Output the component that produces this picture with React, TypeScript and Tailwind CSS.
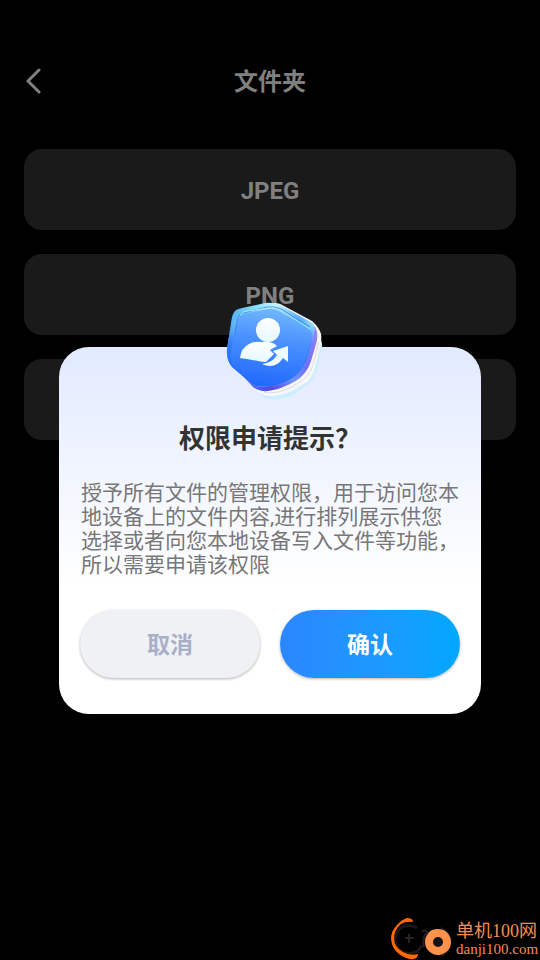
import React from "react";

const formats = ["JPEG", "PNG", ""];

function ShieldIcon() {
  return (
    <svg viewBox="0 0 104 108" className="h-[108px] w-[104px]" aria-hidden="true">
      <defs>
        <linearGradient id="face" x1="0.55" y1="0" x2="0.4" y2="1">
          <stop offset="0" stopColor="#72b8ff" />
          <stop offset="0.4" stopColor="#4a91ff" />
          <stop offset="1" stopColor="#2169fc" />
        </linearGradient>
        <linearGradient id="rim" x1="0" y1="0.2" x2="1" y2="0.4">
          <stop offset="0" stopColor="#4fa9f2" />
          <stop offset="0.25" stopColor="#7fd8f8" />
          <stop offset="0.5" stopColor="#c4f6ff" />
          <stop offset="0.8" stopColor="#55acfb" />
          <stop offset="1" stopColor="#a9ecff" />
        </linearGradient>
        <linearGradient id="rimFade" x1="0" y1="0" x2="0" y2="1">
          <stop offset="0.25" stopColor="#3b84fd" stopOpacity="0" />
          <stop offset="0.5" stopColor="#3078fc" />
          <stop offset="1" stopColor="#2469fa" />
        </linearGradient>
        <linearGradient id="side" x1="1" y1="0" x2="0.2" y2="1">
          <stop offset="0" stopColor="#9a8cf8" />
          <stop offset="0.45" stopColor="#6f6cf3" />
          <stop offset="0.65" stopColor="#6f95fb" />
          <stop offset="0.85" stopColor="#5247dd" />
          <stop offset="1" stopColor="#4f86ff" />
        </linearGradient>
        <linearGradient id="person" x1="0" y1="0" x2="0" y2="1">
          <stop offset="0" stopColor="#ffffff" />
          <stop offset="1" stopColor="#e4f8ff" />
        </linearGradient>
      </defs>
      <path d="M20 70L96 38Q101 42 100 51L96 69Q94 79 87 86L71 97Q58 103 47 101Q41 100 36 95Z" fill="#cdeefb" />
      <path d="M8 66L52 5Q58 5 62 8L90 23Q97 29 99 36Q100 42 98 50L93 69Q91 78 85 84L70 93Q58 98 48 98Q42 98 36 94Z" fill="#f8f6f8" />
      <path d="M42 94Q54 97 70 89L83 80Q89 74 91 67L97 44" fill="none" stroke="#dedce6" strokeWidth="1" />
      <path d="M6 62L88 25Q94 28 95 34Q96 40 94 46L89 63Q86 73 78 80Q70 86 56 91L46 93Q38 94 31 89Z" fill="url(#side)" />
      <path d="M14 12Q16 11 20 10L43 5Q53 4 60 8L90 25Q94 28 92 35L86 58Q82 71 73 78Q63 86 48 88Q38 90 31 87L10 69Q4 62 5 51L9 25Q10 15 14 12Z" fill="url(#rim)" />
      <path d="M14 12Q16 11 20 10L43 5Q53 4 60 8L90 25Q94 28 92 35L86 58Q82 71 73 78Q63 86 48 88Q38 90 31 87L10 69Q4 62 5 51L9 25Q10 15 14 12Z" fill="url(#rimFade)" />
      <path d="M20 17Q22 16 25 15L46 11Q53 10 59 14L87 31Q91 34 90 39L85 58Q81 71 72 78Q62 86 48 88Q38 89 32 86L12 69Q8 63 9 54L14 26Q16 18 20 17Z" fill="url(#face)" />
      <path d="M12 40L15 22Q16 16 21 15L45 9Q53 8 59 11L88 29" fill="none" stroke="#3f8cf5" strokeWidth="1" />
      <path d="M18 17Q21 13 26 13L46 10Q53 9 60 13L88 31" fill="none" stroke="#a5e6ff" strokeWidth="1" />
      <circle cx="46" cy="32" r="12" fill="url(#person)" />
      <path d="M18 60Q19 50 27 46Q32 43 40 44Q50 43 55 48L48 52L52 56L44 64Q40 64 36 63Q24 61 18 60Z" fill="url(#person)" />
      <path d="M40 66Q50 65 55 57L51 53L66 48V64L61 60Q53 72 40 66Z" fill="#effbff" />
    </svg>
  );
}

function Watermark() {
  return (
    <div className="absolute right-0 bottom-0 flex items-end">
      <svg viewBox="0 0 70 45" className="h-[45px] w-[70px]" fill="none" aria-hidden="true">
        <path d="M31 13A14 14 0 1 0 36 30" stroke="#1d1718" strokeWidth="3" />
        <path d="M19 23H28M23 19V28" stroke="#292122" strokeWidth="2" />
        <path d="M27 7Q27 3 21 3Q15 5 11 10Q5 16 5 24Q6 34 13 39Q21 45 28 44Q32 43 32 39Q24 41 17 37Q8 32 8 24Q8 15 15 9Q20 6 27 7Z" fill="#ff6900" />
        <path d="M36 17Q38 14 41 17Q36 23 38 32" stroke="#29201f" strokeWidth="2" />
        <path d="M55 13A15 15 0 0 1 55 41" stroke="#211a1a" strokeWidth="2" />
        <path d="M51 14A13 13 0 1 1 41 20Q44 14 51 14Z" fill="#ff914c" />
        <circle cx="52" cy="27" r="5" fill="#171213" />
      </svg>
      <div className="w-[84px] pb-0.5 font-['Liberation_Serif','Noto_Sans_CJK_SC',serif] whitespace-nowrap text-[#f88c50]">
        <div className="text-[18px] leading-[20px]">单机100网</div>
        <div className="text-[15px] leading-[17px]">danji100.com</div>
      </div>
    </div>
  );
}

export default function App() {
  return (
    <div className="relative min-h-screen overflow-hidden bg-black font-[Roboto,'Noto_Sans_CJK_SC',sans-serif]" lang="zh-CN">
      <header className="grid h-[101px] grid-cols-[48px_1fr_48px] items-center px-2 pt-[60px]">
        <button type="button" aria-label="返回" className="flex h-10 items-center justify-center pl-1">
          <svg viewBox="0 0 16 26" className="h-[26px] w-4" fill="none" stroke="#808080" strokeWidth="3" strokeLinecap="round" strokeLinejoin="round" aria-hidden="true">
            <path d="M13 2L2 13L13 24" />
          </svg>
        </button>
        <h1 className="pt-0.5 text-center text-2xl font-bold text-[#808080]">文件夹</h1>
      </header>

      <main className="flex flex-col gap-6 px-6 pt-12">
        {formats.map((name, i) => (
          <section key={i} className="flex h-[81px] items-center justify-center rounded-[18px] bg-[#1a1a1a] pt-0.5 text-2xl font-bold text-[#808080]">
            {name}
          </section>
        ))}
      </main>

      <div className="absolute inset-0 px-[59px] pt-[347px]">
        <div role="dialog" aria-modal="true" aria-labelledby="dialog-title" className="relative rounded-[30px] bg-linear-to-b from-[#e2eaff] to-white to-65% px-[21px] pt-[75px] pb-9">
          <div className="absolute inset-x-0 -top-[49px] flex justify-center pl-2">
            <ShieldIcon />
          </div>
          <h2 id="dialog-title" className="text-center text-[26px] leading-[34px] font-bold text-[#333333]">权限申请提示？</h2>
          <p className="mt-[25px] px-px text-[21px] leading-6 text-[#777777]">
            授予所有文件的管理权限，用于访问您本地设备上的文件内容,进行排列展示供您选择或者向您本地设备写入文件等功能，所以需要申请该权限
          </p>
          <div className="mt-[33px] grid grid-cols-2 gap-5 text-[23px] font-bold">
            <button type="button" className="h-[68px] rounded-full bg-[#f0f1f5] pt-1 text-[#a9afc7] shadow-[0_1px_3px_rgba(0,0,0,0.3)]">取消</button>
            <button type="button" className="h-[68px] rounded-full bg-linear-to-r from-[#2b86ff] to-[#00a8ff] pt-1 text-white shadow-[0_1px_3px_rgba(0,0,0,0.3)]">确认</button>
          </div>
        </div>
      </div>
      <Watermark />
    </div>
  );
}
